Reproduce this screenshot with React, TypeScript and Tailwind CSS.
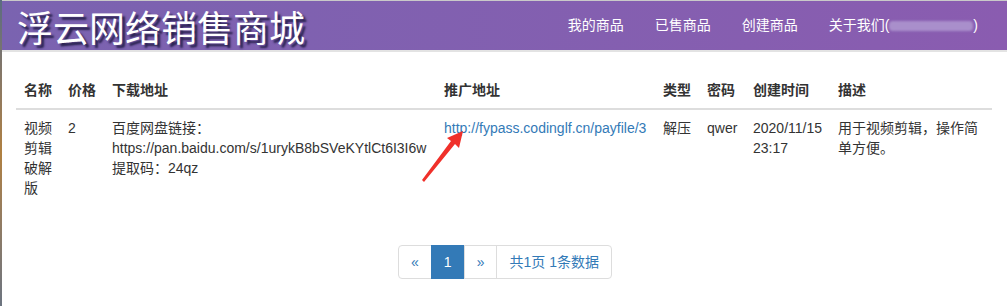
const rows = [
  {
    name: ["视频", "剪辑", "破解", "版"],
    price: "2",
    download: ["百度网盘链接：", "https://pan.baidu.com/s/1urykB8bSVeKYtlCt6I3I6w", "提取码：24qz"],
    promo: "http://fypass.codinglf.cn/payfile/3",
    type: "解压",
    pwd: "qwer",
    created: ["2020/11/15", "23:17"],
    desc: "用于视频剪辑，操作简单方便。",
  },
]

const font = { fontFamily: '"Liberation Sans", "Noto Sans CJK SC", sans-serif' }

function Navbar() {
  return (
    <div className="flex h-[51px] items-center justify-between border-b-2 border-[#e3e3e3] bg-gradient-to-r from-[#7a63b0] to-[#8a5cb0] pl-[15px] pr-[29px]">
      <h1
        className="text-[36px] leading-none text-white"
        style={{ fontFamily: '"Noto Sans CJK SC", sans-serif', textShadow: "3px 3px 2px #2a2250" }}
      >
        浮云网络销售商城
      </h1>
      <nav className="flex items-center gap-[31px] text-[14px] text-white">
        <a>我的商品</a>
        <a>已售商品</a>
        <a>创建商品</a>
        <a className="flex items-center">
          关于我们(
          <span className="inline-block h-[10px] w-[84px] rounded-sm bg-[#a98fcb] blur-[1px]" />)
        </a>
      </nav>
    </div>
  )
}

function Arrow() {
  return (
    <svg className="pointer-events-none absolute left-[418px] top-[126px]" width="50" height="60" viewBox="0 0 50 60">
      <polygon points="45,5 41,22 37,18 6,56 4,54 33,15 29,12" fill="#f0302a" />
    </svg>
  )
}

export default function App() {
  return (
    <div className="relative flex min-h-[306px] w-[1007px] bg-white" style={font}>
      <div className="w-[2px] bg-gradient-to-b from-[#5b6c80] via-[#b08040] to-[#6c7480]" />
      <div className="flex-1 border-t border-[#c9c9c9]">
        <Navbar />
        <div className="pl-[14px] pr-[13px] pt-5">
          <table className="w-[976px] table-fixed border-collapse text-left text-[14px] leading-5 text-[#333]">
            <colgroup>
              <col className="w-[44px]" />
              <col className="w-[44px]" />
              <col className="w-[332px]" />
              <col className="w-[219px]" />
              <col className="w-[44px]" />
              <col className="w-[46px]" />
              <col className="w-[85px]" />
              <col />
            </colgroup>
            <thead>
              <tr className="border-b-2 border-[#ddd]">
                <th className="p-2 font-bold">名称</th>
                <th className="p-2 font-bold">价格</th>
                <th className="p-2 font-bold">下载地址</th>
                <th className="p-2 font-bold">推广地址</th>
                <th className="p-2 font-bold">类型</th>
                <th className="p-2 font-bold">密码</th>
                <th className="p-2 font-bold">创建时间</th>
                <th className="p-2 font-bold">描述</th>
              </tr>
            </thead>
            <tbody>
              {rows.map((r) => (
                <tr key={r.promo} className="align-top">
                  <td className="p-2">
                    {r.name.map((n) => (
                      <div key={n}>{n}</div>
                    ))}
                  </td>
                  <td className="p-2">{r.price}</td>
                  <td className="p-2 whitespace-nowrap">
                    {r.download.map((d) => (
                      <div key={d}>{d}</div>
                    ))}
                  </td>
                  <td className="p-2 whitespace-nowrap">
                    <a className="text-[#337ab7]">{r.promo}</a>
                  </td>
                  <td className="p-2">{r.type}</td>
                  <td className="p-2">{r.pwd}</td>
                  <td className="p-2">
                    {r.created.map((c) => (
                      <div key={c}>{c}</div>
                    ))}
                  </td>
                  <td className="p-2 pr-2">{r.desc}</td>
                </tr>
              ))}
            </tbody>
          </table>
          <div className="mt-[39px] flex justify-center">
            <ul className="flex text-[14px] leading-5 text-[#337ab7]">
              <li className="rounded-l border border-[#ddd] px-3 py-[6px]">«</li>
              <li className="-ml-px border border-[#337ab7] bg-[#337ab7] px-3 py-[6px] text-white">1</li>
              <li className="-ml-px border border-[#ddd] px-3 py-[6px]">»</li>
              <li className="-ml-px rounded-r border border-[#ddd] px-3 py-[6px]">共1页 1条数据</li>
            </ul>
          </div>
        </div>
      </div>
      <Arrow />
    </div>
  )
}
